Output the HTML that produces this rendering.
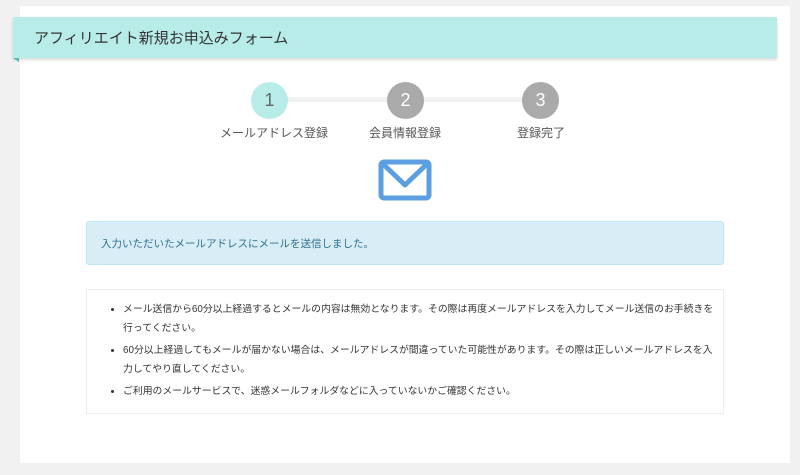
<!DOCTYPE html>
<html><head><meta charset="utf-8"><style>
*{margin:0;padding:0;box-sizing:border-box}
body{width:800px;height:475px;background:#f1f1f1;font-family:"Liberation Sans","Noto Sans CJK JP",sans-serif;color:#444;position:relative;overflow:hidden}
.panel{position:absolute;left:20px;top:6px;width:770px;height:457px;background:#fff}
.hdr{position:absolute;left:13px;top:17px;width:764px;height:41px;background:#b8ece9;box-shadow:0 2px 3px rgba(0,0,0,.15);font-size:15px;color:#333;padding:10px 0 0 21px}
.tri{position:absolute;left:13px;top:58px;width:0;height:0;border-top:4px solid #5bb8b3;border-left:6px solid transparent}
.line{position:absolute;left:270px;top:97px;width:270px;height:5px;background:#f1f1f1}
.c{position:absolute;top:82px;width:37px;height:37px;border-radius:50%;background:#aaa;color:#fff;font-size:18px;text-align:center;line-height:37px}
.lbl{position:absolute;top:124px;font-size:12px;color:#555;width:120px;text-align:center}
.info{position:absolute;left:86px;top:221px;width:638px;height:44px;background:#d9edf7;border:1px solid #bce8f1;border-radius:3px;font-size:10.5px;color:#31708f;padding:14px 0 0 14px}
.list{position:absolute;left:86px;top:289px;width:638px;height:125px;border:1px solid #eee;font-size:9.85px;color:#333;padding:10px 0 0 36px;white-space:nowrap}
.list li{line-height:19px;margin-bottom:3px}
</style></head><body>
<div class="panel"></div>
<div class="hdr">アフィリエイト新規お申込みフォーム</div>
<div class="tri"></div>
<div class="line"></div>
<div class="c" style="left:251px;background:#b8ece9;color:#666">1</div>
<div class="c" style="left:387px">2</div>
<div class="c" style="left:522px">3</div>
<div class="lbl" style="left:214px">メールアドレス登録</div>
<div class="lbl" style="left:345px">会員情報登録</div>
<div class="lbl" style="left:481px">登録完了</div>
<svg style="position:absolute;left:378px;top:159px" width="54" height="42" viewBox="0 0 54 42"><rect x="3" y="3" width="48" height="36" rx="3" fill="none" stroke="#5b9fe0" stroke-width="5"/><path d="M4 4 L27 26 L50 4" fill="none" stroke="#5b9fe0" stroke-width="5" stroke-linejoin="round"/></svg>
<div class="info">入力いただいたメールアドレスにメールを送信しました。</div>
<ul class="list">
<li>メール送信から60分以上経過するとメールの内容は無効となります。その際は再度メールアドレスを入力してメール送信のお手続きを<br>行ってください。</li>
<li>60分以上経過してもメールが届かない場合は、メールアドレスが間違っていた可能性があります。その際は正しいメールアドレスを入<br>力してやり直してください。</li>
<li>ご利用のメールサービスで、迷惑メールフォルダなどに入っていないかご確認ください。</li>
</ul>
</body></html>
